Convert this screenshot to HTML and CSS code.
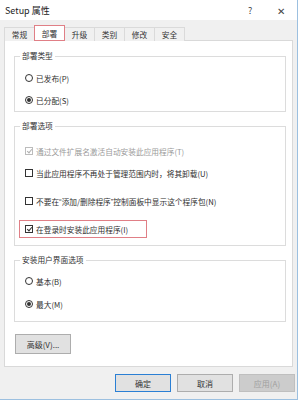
FILE: index.html
```html
<!DOCTYPE html>
<html>
<head lang="zh-CN">
    <meta charset="UTF-8">
    <title>Setup 属性</title>
    <link rel="stylesheet" href="styles.css">
</head>
<body>
<div class="window">
    <div class="titlebar">
        <span class="title">Setup 属性</span>
        <span class="help">?</span>
        <span class="close">&#x2715;</span>
    </div>

    <ul class="tabs">
        <li>常规</li>
        <li class="active">部署</li>
        <li>升级</li>
        <li>类别</li>
        <li>修改</li>
        <li>安全</li>
    </ul>

    <div class="panel">
        <fieldset class="group group-type">
            <legend>部署类型</legend>
            <div class="row"><span class="radio"></span>已发布(P)</div>
            <div class="row"><span class="radio checked"></span>已分配(S)</div>
        </fieldset>

        <fieldset class="group group-opts">
            <legend>部署选项</legend>
            <div class="row r1 disabled"><span class="check checked"></span>通过文件扩展名激活自动安装此应用程序(T)</div>
            <div class="row r2"><span class="check"></span>当此应用程序不再处于管理范围内时，将其卸载(U)</div>
            <div class="row r3"><span class="check"></span>不要在<span class="q">“</span>添加/删除程序<span class="q">”</span>控制面板中显示这个程序包(N)</div>
            <div class="row r4 mark"><span class="check checked"></span>在登录时安装此应用程序(I)</div>
        </fieldset>

        <fieldset class="group group-ui">
            <legend>安装用户界面选项</legend>
            <div class="row r1"><span class="radio"></span>基本(B)</div>
            <div class="row r2"><span class="radio checked"></span>最大(M)</div>
        </fieldset>

        <button class="btn btn-adv">高级(V)...</button>
    </div>

    <div class="footer">
        <button class="btn btn-ok">确定</button>
        <button class="btn">取消</button>
        <button class="btn btn-off">应用(A)</button>
    </div>
</div>
</body>
</html>
```

FILE: styles.css
```css
* {
    margin: 0;
    padding: 0;
    box-sizing: border-box;
}
body {
    background: #fff;
    font-family: "Noto Sans CJK SC", "Noto Sans", sans-serif;
    font-size: 7.7px;
    color: #2f2f2f;
}
.window {
    width: 298px;
    height: 400px;
    background: #f0f0f0;
    border-right: 1px solid #9cc0e0;
    border-bottom: 1px solid #9cc0e0;
}
.titlebar {
    height: 20px;
    background: #fff;
    display: flex;
    align-items: center;
    font-size: 9px;
    color: #222;
}
.title {
    margin-left: 5px;
    flex: 1;
}
.help {
    width: 10px;
    margin-right: 19px;
    color: #444;
}
.close {
    width: 10px;
    margin-right: 10px;
    font-size: 10px;
    color: #444;
}
.tabs {
    list-style: none;
    display: flex;
    align-items: flex-end;
    height: 21px;
    padding-left: 4px;
    margin-bottom: -1px;
    position: relative;
}
.tabs li {
    width: 31px;
    height: 14px;
    line-height: 13px;
    text-align: center;
    border: 1px solid #dadada;
    border-bottom: none;
    margin-right: -1px;
    background: #f0f0f0;
    color: #333;
}
.tabs li.active {
    height: 16px;
    line-height: 15px;
    background: #fff;
    border-color: #e07f86;
    border-bottom: 1px solid #e07f86;
    position: relative;
    z-index: 1;
}
.panel {
    margin-left: 4px;
    width: 289px;
    height: 327px;
    background: #fff;
    border: 1px solid #d9d9d9;
    padding: 10px 6px 0 9px;
}
.group {
    border: 1px solid #dcdcdc;
    padding: 0 0 0 10px;
    min-width: 0;
}
.group legend {
    line-height: 10px;
    padding: 0 2px;
    margin-left: -5px;
    color: #333;
}
.row {
    height: 20px;
    display: flex;
    align-items: center;
}
.q {
    font-family: "Liberation Sans", sans-serif;
}
.group-type {
    height: 61px;
    padding-top: 6px;
}
.group-type .row {
    height: 22px;
}
.group-opts {
    margin-top: 9px;
    height: 125px;
}
.group-opts .r1 { margin-top: 10px; }
.group-opts .r2 { margin-top: 2px; }
.group-opts .r3 { margin-top: 8px; }
.group-opts .r4 { margin-top: 9px; }
.mark {
    height: 18px;
    width: 128px;
    margin-left: -6px;
    padding-left: 5px;
    border: 1px solid #e07f86;
}
.group-ui {
    margin-top: 9px;
    height: 67px;
}
.group-ui .r1 { margin-top: 6px; }
.group-ui .r2 { margin-top: 3px; }
.disabled {
    color: #9a9a9a;
}
.radio, .check {
    width: 8px;
    height: 8px;
    margin-right: 3px;
    border: 1px solid #333;
    background: #fff;
    flex: none;
    position: relative;
}
.radio {
    border-radius: 50%;
}
.radio.checked::after {
    content: "";
    position: absolute;
    left: 1px;
    top: 1px;
    width: 4px;
    height: 4px;
    border-radius: 50%;
    background: #333;
}
.check.checked::after {
    content: "";
    position: absolute;
    left: 2px;
    top: 0px;
    width: 2px;
    height: 4px;
    border: solid #333;
    border-width: 0 1px 1px 0;
    transform: rotate(40deg);
}
.disabled .check {
    border-color: #bcbcbc;
}
.disabled .check.checked::after {
    border-color: #b0b0b0;
}
.btn {
    font-family: inherit;
    font-size: 8px;
    color: #333;
    background: #e1e1e1;
    border: 1px solid #adadad;
    width: 56px;
    height: 18px;
}
.btn-adv {
    margin-top: 12px;
    margin-left: 1px;
    height: 20px;
}
.footer {
    display: flex;
    justify-content: flex-end;
    gap: 6px;
    padding: 7px 2px 0 0;
}
.btn-ok {
    border-color: #2a7fd4;
}
.btn-off {
    background: #cccccc;
    border-color: #bfbfbf;
    color: #a0a0a0;
}
```
